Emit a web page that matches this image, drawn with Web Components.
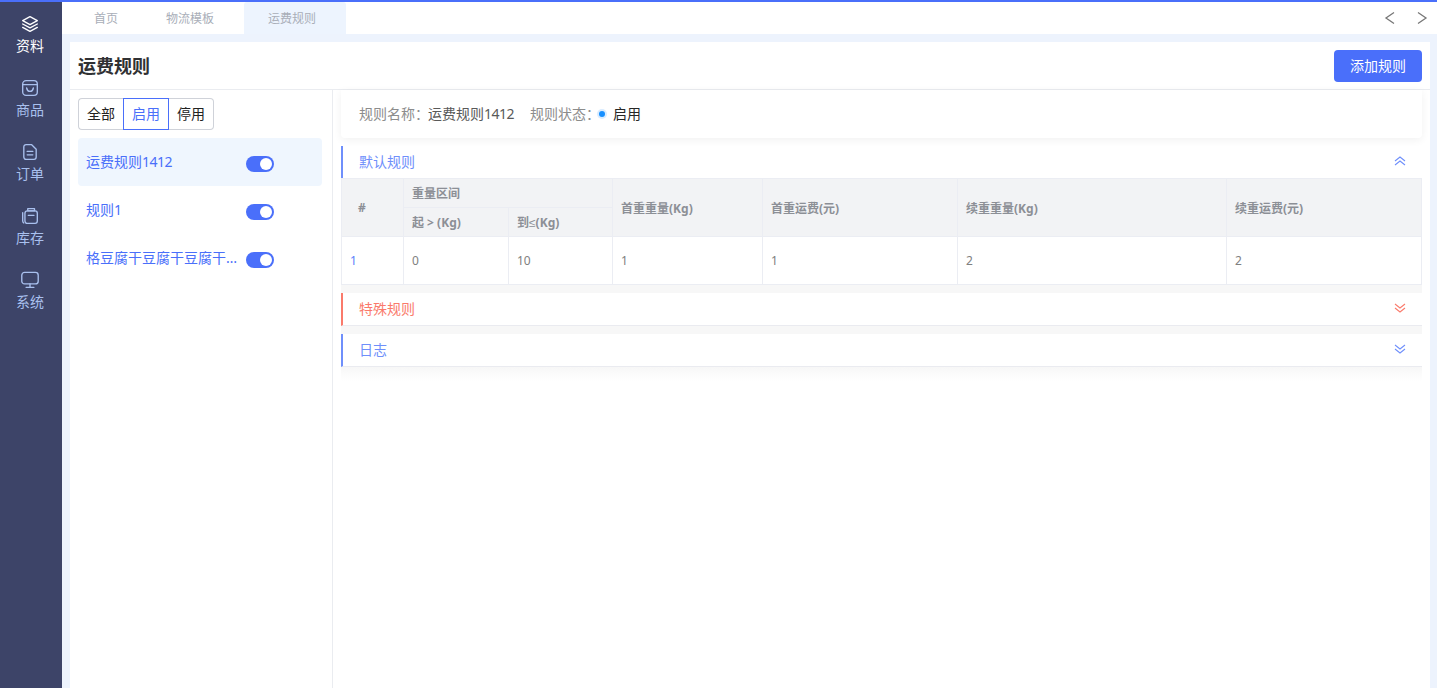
<!DOCTYPE html>
<html lang="zh">
<head>
<meta charset="utf-8">
<title>运费规则</title>
<style>
  html, body { margin: 0; height: 100%; overflow: hidden; }
  body { font-family: "Noto Sans", "Noto Sans CJK SC", sans-serif; font-size: 14px; }
</style>
</head>
<body>
<app-shell></app-shell>

<script>
const icons = {
  layers: '<path d="M8 1.5 14.5 5 8 8.5 1.5 5z"/><path d="M1.5 8 8 11.5 14.5 8"/><path d="M1.5 11 8 14.5 14.5 11"/>',
  bag: '<rect x="1.5" y="1.5" width="13" height="13" rx="3"/><path d="M1.5 5h13"/><path d="M5 8c.4 2 1.5 3 3 3s2.6-1 3-3"/>',
  doc: '<path d="M2.5 3.5a2 2 0 0 1 2-2h5l4 4v7a2 2 0 0 1-2 2h-7a2 2 0 0 1-2-2z"/><path d="M5.5 7.5h5M5.5 10.5h5"/>',
  stock: '<rect x="3.5" y="3.5" width="11" height="11" rx="2"/><path d="M1.5 5v7.5a2 2 0 0 0 1 1.7"/><path d="M6 1.5h6v2H6z"/><path d="M6.5 7.5h5"/>',
  monitor: '<rect x=".7" y="1.2" width="14.6" height="10.3" rx="2.5"/><path d="M8 11.5v3M4.5 14.5h7"/>'
};

class SideNav extends HTMLElement {
  constructor() {
    super();
    const items = [['layers', '资料', true], ['bag', '商品'], ['doc', '订单'], ['stock', '库存'], ['monitor', '系统']];
    this.attachShadow({ mode: 'open' }).innerHTML = `
      <style>
        :host { display: block; width: 62px; flex: none; background: #3d4468; padding: 13px 2px 0 0; box-sizing: border-box; }
        .item { height: 64px; display: flex; flex-direction: column; align-items: center; color: #a9c0ee; font-size: 14px; line-height: 18px; }
        .item.on { color: #fff; }
        svg { width: 18px; height: 18px; margin-bottom: 4px; fill: none; stroke: currentColor; stroke-width: 1.2; stroke-linejoin: round; stroke-linecap: round; }
      </style>
      ${items.map(([i, t, on]) => `<div class="item ${on ? 'on' : ''}"><svg viewBox="0 0 16 16">${icons[i]}</svg>${t}</div>`).join('')}
    `;
  }
}
customElements.define('side-nav', SideNav);

class TabBar extends HTMLElement {
  constructor() {
    super();
    this.attachShadow({ mode: 'open' }).innerHTML = `
      <style>
        :host { display: flex; height: 32px; flex: none; background: #fff; padding-left: 8px; font-size: 12px; color: #a9aeb8; }
        .tab { padding: 0 24px; line-height: 33px; }
        .tab.on { background: #edf4fe; margin-left: 6px; padding-right: 30px; border-radius: 3px 3px 0 0; }
        .arrows { margin-left: auto; display: flex; gap: 16px; padding: 8px 7px 0 0; }
        svg { width: 16px; height: 16px; fill: none; stroke: #777; stroke-width: 1.3; }
      </style>
      <div class="tab">首页</div>
      <div class="tab">物流模板</div>
      <div class="tab on">运费规则</div>
      <div class="arrows">
        <svg viewBox="0 0 16 16"><path d="M12 2.5 4 8l8 5.5"/></svg>
        <svg viewBox="0 0 16 16"><path d="M4 2.5 12 8l-8 5.5"/></svg>
      </div>
    `;
  }
}
customElements.define('tab-bar', TabBar);

class PageHead extends HTMLElement {
  constructor() {
    super();
    this.attachShadow({ mode: 'open' }).innerHTML = `
      <style>
        :host { display: flex; align-items: center; justify-content: space-between; height: 47px; flex: none; padding: 0 8px; border-bottom: 1px solid #eaecf0; }
        h1 { margin: 0 0 2px; font-size: 18px; font-weight: 700; color: #303133; }
        button { width: 88px; height: 32px; border: 0; border-radius: 4px; background: #4a6ffa; color: #fff; font: inherit; font-size: 14px; padding: 0 0 2px; }
      </style>
      <h1><slot></slot></h1>
      <button>添加规则</button>
    `;
  }
}
customElements.define('page-head', PageHead);

class FilterGroup extends HTMLElement {
  constructor() {
    super();
    this.attachShadow({ mode: 'open' }).innerHTML = `
      <style>
        :host { display: flex; height: 32px; font-size: 14px; color: #222; }
        div { display: flex; align-items: center; justify-content: center; border: 1px solid #cfd2d9; box-sizing: border-box; padding-bottom: 2px; }
        .a { width: 45px; border-radius: 4px 0 0 4px; border-right: 0; }
        .b { width: 46px; border-color: #4a6ffa; color: #4a6ffa; }
        .c { width: 45px; border-radius: 0 4px 4px 0; border-left: 0; }
      </style>
      <div class="a">全部</div><div class="b">启用</div><div class="c">停用</div>
    `;
  }
}
customElements.define('filter-group', FilterGroup);

class RuleItem extends HTMLElement {
  constructor() {
    super();
    this.attachShadow({ mode: 'open' }).innerHTML = `
      <style>
        :host { display: flex; align-items: center; height: 48px; padding: 0 48px 0 8px; border-radius: 4px; color: #4a6ffa; font-size: 14px; }
        :host([active]) { background: #eff6fe; }
        .name { width: 160px; white-space: nowrap; overflow: hidden; text-overflow: ellipsis; line-height: 20px; }
        .toggle { width: 28px; height: 16px; border-radius: 8px; background: #4a6ffa; margin-top: 4px; display: flex; justify-content: flex-end; align-items: center; padding-right: 2px; box-sizing: border-box; }
        .toggle i { width: 12px; height: 12px; border-radius: 50%; background: #fff; }
      </style>
      <div class="name"><slot></slot></div>
      <div class="toggle"><i></i></div>
    `;
  }
}
customElements.define('rule-item', RuleItem);

class InfoBar extends HTMLElement {
  constructor() {
    super();
    this.attachShadow({ mode: 'open' }).innerHTML = `
      <style>
        :host { display: flex; align-items: center; height: 48px; padding: 0 18px 2px; box-sizing: border-box; background: #fff; border-radius: 0 0 4px 4px; box-shadow: 0 2px 8px rgba(0,0,0,.06); color: #8c8c8c; font-size: 14px; }
        .v { color: #595959; margin: 0 16px 0 -1px; }
        .v b { font-weight: 400; letter-spacing: -.5px; }
        .l2 { margin-right: -1px; }
        .dot { width: 6px; height: 6px; border-radius: 50%; background: #1890ff; box-shadow: 0 0 0 2px #d9ecff; margin: 2px 8px 0 0; }
        .s { color: #262626; }
      </style>
      规则名称：<span class="v">运费规则<b>1412</b></span><span class="l2">规则状态：</span><span class="dot"></span><span class="s">启用</span>
    `;
  }
}
customElements.define('info-bar', InfoBar);

class RuleSection extends HTMLElement {
  constructor() {
    super();
    const color = this.getAttribute('color');
    const up = this.hasAttribute('open');
    const arrow = up ? 'M2 7 7 3l5 4M2 11 7 7l5 4' : 'M2 3 7 7l5-4M2 7 7 11l5-4';
    this.attachShadow({ mode: 'open' }).innerHTML = `
      <style>
        :host { display: block; background: #fff; }
        header { display: flex; align-items: center; justify-content: space-between; height: 33px; box-sizing: border-box; padding: 0 15px 2px 16px; border-left: 2px solid ${color}; border-bottom: 1px solid #eaebf0; color: ${color}; font-size: 14px; }
        :host([open]) header { height: 32px; border-bottom: 0; }
        svg { width: 14px; height: 14px; fill: none; stroke: currentColor; stroke-width: 1.1; }
        .foot { height: 8px; background: #f7f7f7; }
        :host([last]) .foot { height: 14px; background: linear-gradient(#f7f7f7, #fff); }
      </style>
      <header><span><slot name="title"></slot></span><svg viewBox="0 0 14 14"><path d="${arrow}"/></svg></header>
      <slot></slot>
      <div class="foot"></div>
    `;
  }
}
customElements.define('rule-section', RuleSection);

class FeeTable extends HTMLElement {
  constructor() {
    super();
    this.attachShadow({ mode: 'open' }).innerHTML = `
      <style>
        :host { display: block; }
        table { border-collapse: collapse; table-layout: fixed; width: 1081px; font-size: 12px; }
        th, td { border: 1px solid #ebedf3; padding: 0 8px; text-align: left; box-sizing: border-box; }
        th { background: #f2f3f5; color: #8c8f96; font-weight: 700; height: 29px; }
        th[rowspan] { padding-top: 1px; }
        th[colspan] { padding-bottom: 1px; }
        th .le { font-family: "Liberation Sans", sans-serif; font-weight: 400; }
        td { height: 48px; color: #808080; }
        td.first { color: #5d7ffb; }
        th.idx { padding-left: 16px; padding-top: 0; }
      </style>
      <table>
        <colgroup>
          <col style="width:62px"><col style="width:105px"><col style="width:104px"><col style="width:150px">
          <col style="width:195px"><col style="width:269px"><col style="width:195px">
        </colgroup>
        <tr>
          <th class="idx" rowspan="2">#</th>
          <th colspan="2">重量区间</th>
          <th rowspan="2">首重重量(Kg)</th>
          <th rowspan="2">首重运费(元)</th>
          <th rowspan="2">续重重量(Kg)</th>
          <th rowspan="2">续重运费(元)</th>
        </tr>
        <tr><th>起 &gt; (Kg)</th><th>到<span class="le">≤</span>(Kg)</th></tr>
        <tr>
          <td class="first">1</td><td>0</td><td>10</td><td>1</td>
          <td>1</td><td>2</td><td>2</td>
        </tr>
      </table>
    `;
  }
}
customElements.define('fee-table', FeeTable);

class AppShell extends HTMLElement {
  constructor() {
    super();
    this.attachShadow({ mode: 'open' }).innerHTML = `
      <style>
        :host { display: flex; flex-direction: column; height: 100vh; background: #edf3fd; border-top: 2px solid #4a6ffa; box-sizing: border-box; color: #333; }
        .row { flex: 1; display: flex; min-height: 0; }
        .main { flex: 1; display: flex; flex-direction: column; min-width: 0; }
        .card { flex: 1; display: flex; flex-direction: column; margin: 8px 7px 0 8px; background: #fff; min-height: 0; }
        .body { flex: 1; display: flex; min-height: 0; }
        .left { width: 263px; flex: none; box-sizing: border-box; padding: 8px 10px 0 8px; border-right: 1px solid #eaecf0; }
        .list { margin-top: 8px; }
        .right { flex: 1; padding: 0 8px; min-width: 0; }
        info-bar { margin-bottom: 8px; }
        .num { letter-spacing: -.5px; }
      </style>
      <div class="row">
        <side-nav></side-nav>
        <div class="main">
          <tab-bar></tab-bar>
          <div class="card">
            <page-head>运费规则</page-head>
            <div class="body">
              <div class="left">
                <filter-group></filter-group>
                <div class="list">
                  <rule-item active>运费规则<span class="num">1412</span></rule-item>
                  <rule-item>规则1</rule-item>
                  <rule-item>格豆腐干豆腐干豆腐干豆腐干豆腐干</rule-item>
                </div>
              </div>
              <div class="right">
                <info-bar></info-bar>
                <rule-section color="#6f8ffb" open>
                  <span slot="title">默认规则</span>
                  <fee-table></fee-table>
                </rule-section>
                <rule-section color="#fa7a6b"><span slot="title">特殊规则</span></rule-section>
                <rule-section color="#6f8ffb" last><span slot="title">日志</span></rule-section>
              </div>
            </div>
          </div>
        </div>
      </div>
    `;
  }
}
customElements.define('app-shell', AppShell);
</script>
</body>
</html>
